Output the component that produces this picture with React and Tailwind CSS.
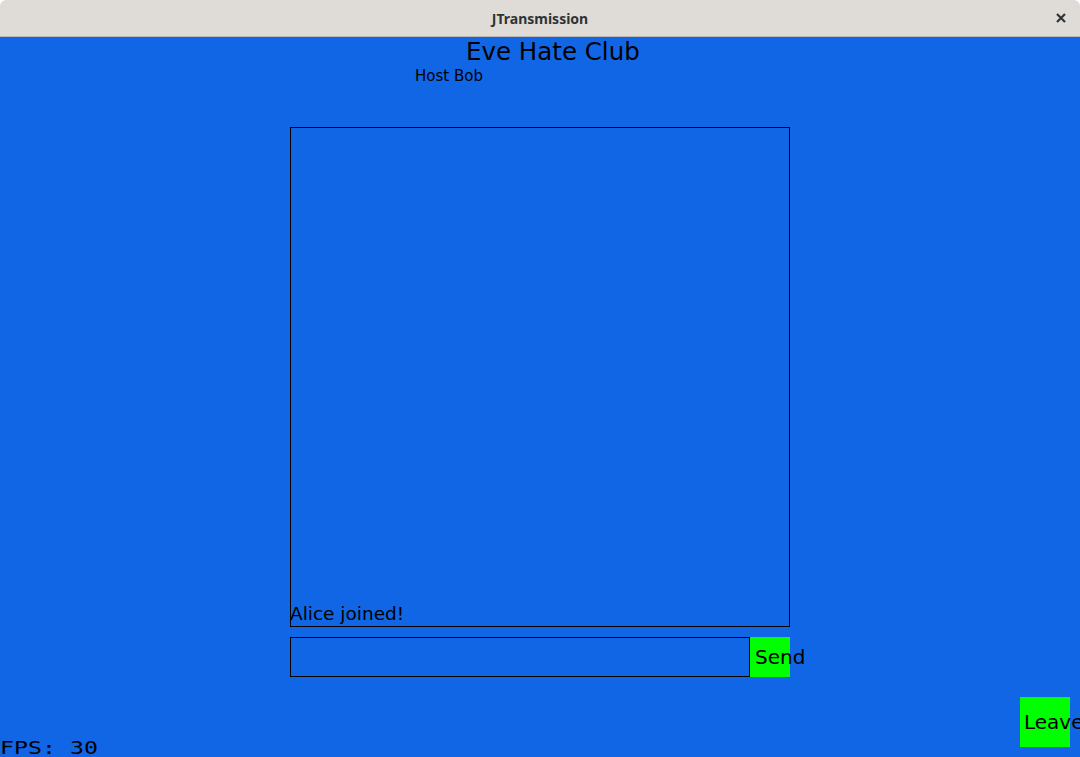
import React from "react";

export default function App() {
  return (
    <div className="w-[1080px] h-[757px] overflow-hidden bg-white flex flex-col" style={{ fontFamily: '"DejaVu Sans", sans-serif' }}>
      <div className="relative h-[37px] shrink-0 rounded-t-[6px] bg-[#dfdbd7] border-b border-[#bcb6b0] flex items-center justify-center">
        <span className="text-[14px] font-bold text-[#2e3436]" style={{ fontFamily: '"Noto Sans", sans-serif' }}>JTransmission</span>
        <svg className="absolute right-[14px] top-[13px]" width="10" height="10" viewBox="0 0 10 10">
          <path d="M1 1 L9 9 M9 1 L1 9" stroke="#2e3436" strokeWidth="2.2" strokeLinecap="butt" />
        </svg>
      </div>
      <div className="flex-1 bg-[#1066e5] flex flex-col text-black">
        <div className="pl-[466px] text-[24.5px] leading-[30px] whitespace-nowrap">Eve Hate Club</div>
        <div className="pl-[415px] text-[15px] leading-[18px] whitespace-nowrap">Host Bob</div>
        <div className="ml-[290px] mt-[42px] w-[500px] h-[500px] border border-black flex flex-col justify-end">
          <div className="-ml-px text-[18.5px] leading-[24px] whitespace-nowrap">Alice joined!</div>
        </div>
        <div className="ml-[290px] mt-[10px] flex">
          <div className="w-[460px] h-[40px] border border-black"></div>
          <div className="w-[40px] h-[40px] bg-[#00ff00] pl-[5px] text-[20px] leading-[40px] whitespace-nowrap overflow-visible">Send</div>
        </div>
        <div className="mt-[20px] flex justify-between items-end flex-1">
          <div className="origin-bottom-left scale-x-[1.29] text-[18px] leading-[19px] whitespace-nowrap" style={{ fontFamily: '"DejaVu Sans Mono", monospace' }}>FPS: 30</div>
          <div className="mr-[10px] mb-[10px] w-[50px] h-[50px] bg-[#00ff00] pl-[4px] text-[20px] leading-[50px] whitespace-nowrap">Leave</div>
        </div>
      </div>
    </div>
  );
}
